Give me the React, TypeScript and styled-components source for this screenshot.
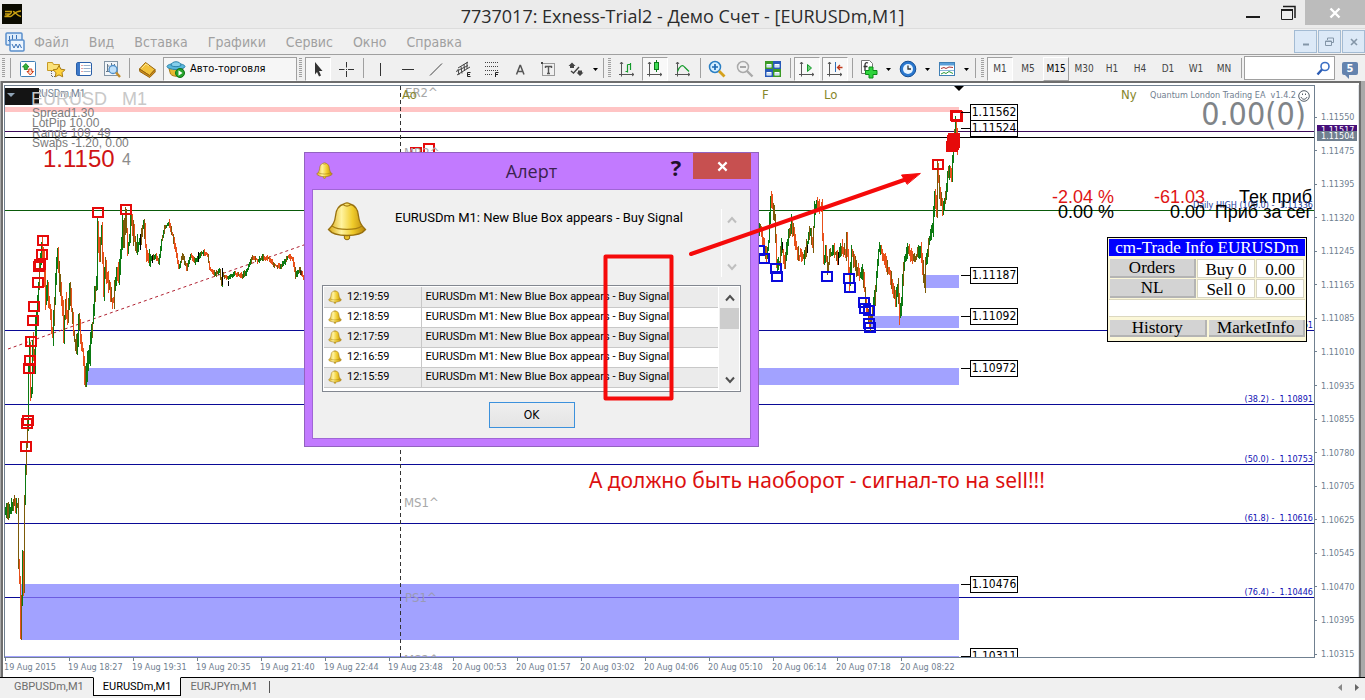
import React from "react";
import styled, { createGlobalStyle, css } from "styled-components";

const UI = `"DejaVu Sans Condensed", "DejaVu Sans", "Noto Sans", sans-serif`;
const NARROW = `Roboto, "Liberation Sans", sans-serif`;
const NOTE = `"Noto Sans", "Open Sans", sans-serif`;
const SEGOE = `"Open Sans", "Noto Sans", sans-serif`;
const ARIAL = `"Liberation Sans", Arial, sans-serif`;
const SERIF = `"Liberation Serif", "Times New Roman", serif`;

const GlobalStyle = createGlobalStyle`
  * { box-sizing: border-box; }
  body { margin: 0; background: #f0f0f0; font-family: ${UI}; font-size: 11px; overflow: hidden; }
  button, input { font: inherit; color: inherit; margin: 0; padding: 0; border: 0; background: none; border-radius: 0; }
  svg { display: block; flex: none; }
`;

const Page = styled.div`
  display: flex;
  flex-direction: column;
  min-height: 100vh;
  min-width: 0;
  background: #f0f0f0;
`;

/* ---------- window caption ---------- */

const TitleBar = styled.header`
  display: grid;
  grid-template-columns: 1fr auto 1fr;
  height: 28px;
  background: #ebebeb;
`;
const TitleIcon = styled.div`
  padding: 4px 2px;
`;
const Title = styled.h1`
  margin: 0;
  font: 400 18px/32px ${SEGOE};
  color: #2b2b2b;
  white-space: nowrap;
`;
const CaptionButtons = styled.div`
  display: flex;
  justify-content: flex-end;
`;
const CaptionButton = styled.button<{ $close?: boolean }>`
  display: flex;
  align-items: center;
  justify-content: center;
  width: ${(p) => (p.$close ? 60 : 35)}px;
  height: 25px;
  background: ${(p) => (p.$close ? "#bcbcbc" : "transparent")};
`;

/* ---------- menu ---------- */

const MenuBar = styled.nav`
  display: flex;
  align-items: center;
  height: 27px;
  padding-left: 5px;
  background: #f0f0f0;
  border-top: 1px solid #dcdcdc;
  border-bottom: 1px solid #a0a0a0;
`;
const MenuItems = styled.div`
  display: flex;
  gap: 20px;
  flex: 1;
  padding-left: 9px;
`;
const MenuItem = styled.button`
  font: 14px/16px ${UI};
  color: #a0a0a0;
`;
const ChildButton = styled.button`
  display: flex;
  align-items: center;
  justify-content: center;
  width: 23px;
  height: 23px;
  margin-left: 1px;
  background: #dce9f7;
  border: 1px solid #a3bbd3;
`;

/* ---------- toolbar ---------- */

const Toolbar = styled.div`
  display: flex;
  align-items: center;
  height: 26px;
  background: #f0f0f0;
  overflow: hidden;
`;
const Grip = styled.span`
  flex: none;
  width: 3px;
  height: 20px;
  margin: 0 2px;
  background: repeating-linear-gradient(#a0a0a0 0 1px, #f0f0f0 1px 2px);
`;
const Divider = styled.span<{ $wide?: boolean }>`
  flex: none;
  width: 1px;
  height: 20px;
  margin: 0 ${(p) => (p.$wide ? 3 : 2)}px 0 3px;
  background: #a0a0a0;
`;
const pressed = css`
  background: #f8f8f8;
  border-color: #a0a0a0 #fff #fff #a0a0a0;
`;
const ToolButton = styled.button<{ $on?: boolean; $raised?: boolean }>`
  display: flex;
  flex: none;
  align-items: center;
  justify-content: center;
  width: 26px;
  height: 24px;
  margin: 2px 1px 0;
  border: 1px solid transparent;
  font: 10px/12px ${UI};
  color: ${(p) => (p.$raised ? "#000" : "#444")};
  ${(p) => p.$on && pressed}
  ${(p) => p.$raised && css`border-color: #fff #a0a0a0 #a0a0a0 #fff;`}
`;
const CaretButton = styled.button<{ $narrow?: boolean }>`
  display: flex;
  flex: none;
  align-items: center;
  justify-content: center;
  width: ${(p) => (p.$narrow ? 10 : 11)}px;
  height: 24px;
  margin-top: 2px;
`;
const AutoTrade = styled.button`
  display: flex;
  flex: none;
  align-items: center;
  gap: 4px;
  width: 134px;
  height: 24px;
  margin: 2px 0 0 2px;
  padding-left: 2px;
  border: 1px solid #a0a0a0;
  border-bottom-color: #fff;
  background: #f6f6f6;
  font: 11px/14px ${UI};
  color: #000;
`;
const SearchBox = styled.label`
  display: flex;
  align-items: center;
  flex: 1;
  min-width: 60px;
  height: 24px;
  padding-right: 3px;
  background: #fff;
  border: 1px solid #a0a0a0;
`;
const SearchInput = styled.input`
  flex: 1;
  width: 20px;
  outline: none;
`;
const ChatButton = styled.button`
  display: flex;
  flex: none;
  align-items: center;
  justify-content: center;
  width: 30px;
  height: 24px;
`;
const ChatBubble = styled.span`
  position: relative;
  width: 16px;
  height: 13px;
  background: #6483ae;
  border-radius: 2px;
  color: #fff;
  font: bold 11px/13px ${UI};
  text-align: center;
  &::after {
    content: "";
    position: absolute;
    left: 3px;
    top: 13px;
    border: 2px solid transparent;
    border-top-color: #6483ae;
    border-right-color: #6483ae;
  }
`;

/* ---------- chart window ---------- */

const Workspace = styled.main`
  display: flex;
  flex: 1;
  min-height: 0;
  background: #a9a9a9;
`;
const ChartFrame = styled.section`
  flex: 1;
  min-width: 0;
  display: grid;
  grid-template-columns: minmax(0, 1fr) 44px;
  grid-template-rows: minmax(0, 1fr) 19px;
  margin: 0 4px 0 1px;
  padding: 2px 0 0 1px;
  background: #fff;
  border: solid #6e6e6e;
  border-width: 2px 2px 0 2px;
`;
const Plot = styled.div`
  position: relative;
  overflow: hidden;
  border: 1px solid #708090;
`;
const Series = styled.svg`
  position: absolute;
  inset: 0;
  width: 100%;
  height: 100%;
`;
const PriceAxis = styled.div`
  position: relative;
  grid-row: 1 / 3;
  grid-column: 2;
  display: flex;
  flex-direction: column;
  justify-content: space-between;
  padding: 26px 0 17px;
  border-right: 1px solid #dfe3e8;
`;
const AxisPrice = styled.span`
  display: flex;
  align-items: center;
  gap: 4px;
  font: 9px/12px ${UI};
  color: #708090;
  &::before {
    content: "";
    width: 2px;
    height: 1px;
    background: #708090;
  }
`;
const AxisBadge = styled.span<{ $top: number; $bg: string }>`
  position: absolute;
  top: ${(p) => p.$top}px;
  left: 2px;
  width: 40px;
  padding-left: 4px;
  background: ${(p) => p.$bg};
  color: #fff;
  font: 9px/10px ${UI};
`;
const TimeAxis = styled.div`
  display: flex;
  min-width: 0;
  overflow: hidden;
`;
const TimeLabel = styled.span`
  flex: none;
  width: 64px;
  height: 16px;
  background: linear-gradient(#708090, #708090) 1px 0 / 1px 3px no-repeat;
  font: 9px/18px ${UI};
  color: #708090;
  white-space: nowrap;
`;

const Note = styled.span<{
  $x?: number;
  $right?: number;
  $y: number;
  $size: number;
  $color: string;
  $font?: string;
}>`
  position: absolute;
  ${(p) => (p.$right !== undefined ? `right: ${p.$right}px;` : `left: ${p.$x}px;`)}
  top: ${(p) => p.$y}px;
  font: ${(p) => p.$size}px/16px ${(p) => p.$font || UI};
  color: ${(p) => p.$color};
  white-space: pre;
`;
const SymbolTab = styled.button`
  position: absolute;
  left: 0;
  top: 2px;
  display: flex;
  width: 34px;
  height: 17px;
  padding: 5px 0 0 2px;
  background: #141414;
`;
const PriceTag = styled.span<{ $y: number }>`
  position: absolute;
  left: 965px;
  top: ${(p) => p.$y}px;
  width: 48px;
  height: 17px;
  border: 1px solid #000;
  text-align: center;
  font: 12px/15px ${UI};
  color: #000;
  &::before {
    content: "";
    position: absolute;
    right: 100%;
    top: 7px;
    width: 10px;
    height: 1px;
    background: #000;
  }
`;
const Smiley = styled.span`
  position: absolute;
  right: 4px;
  top: 4px;
`;

/* ---------- trade info panel ---------- */

const TradePanel = styled.aside`
  position: absolute;
  right: 7px;
  top: 151px;
  display: flex;
  flex-direction: column;
  width: 200px;
  height: 105px;
  padding: 1px;
  background: #fbf7d8;
  border: 1px solid #000;
  font: 17px/17px ${SERIF};
  color: #000;
`;
const TradeTitle = styled.div`
  height: 17px;
  background: #0000ff;
  color: #fff;
  text-align: center;
  white-space: nowrap;
`;
const TradeGrid = styled.div`
  display: grid;
  grid-template-columns: 86px 58px 48px;
  gap: 1px;
  padding: 3px 0 1px 1px;
`;
const TradeColumn = styled.div`
  display: flex;
  flex-direction: column;
  gap: 1px;
`;
const TradeButton = styled.button`
  flex: 1;
  background: #d3d3d3;
  border: solid #b4b4b4;
  border-width: 0 2px 2px 0;
  text-align: center;
  line-height: 15px;
`;
const TradeCell = styled.span`
  height: 19px;
  background: #fff;
  border: 1px solid #d8d5c4;
  text-align: center;
  line-height: 19px;
`;
const TradeBlank = styled.div`
  height: 18px;
  background: #fff;
  border: solid #dcd8c0;
  border-width: 1px 0;
`;
const TradeFooter = styled.div`
  display: flex;
  gap: 2px;
  height: 23px;
  padding: 3px 0 3px 1px;
`;

/* ---------- alert dialog ---------- */

const Dialog = styled.section`
  position: absolute;
  left: 299px;
  top: 66px;
  display: flex;
  flex-direction: column;
  width: 455px;
  height: 295px;
  padding: 0 7px 8px;
  background: #c27aff;
  border: 1px solid #9263bf;
`;
const DialogHead = styled.div`
  display: grid;
  grid-template-columns: 84px 1fr 84px;
  height: 36px;
`;
const DialogIcon = styled.div`
  padding: 9px 0 0 4px;
`;
const DialogTitle = styled.h2`
  margin: 0;
  text-align: center;
  font: 400 18px/37px ${SEGOE};
  color: #3b2350;
`;
const DialogHeadButtons = styled.div`
  display: flex;
  justify-content: flex-end;
`;
const HelpButton = styled.button`
  width: 26px;
  height: 28px;
  padding-right: 8px;
  font: bold 22px/28px ${SEGOE};
  color: #1f1029;
`;
const DialogClose = styled.button`
  display: flex;
  align-items: center;
  justify-content: center;
  width: 58px;
  height: 26px;
  background: #c75050;
`;
const DialogBody = styled.div`
  flex: 1;
  display: flex;
  flex-direction: column;
  align-items: center;
  padding: 11px 9px 10px;
  background: #f0f0f0;
  border: 1px solid #a066d6;
`;
const MessageRow = styled.div`
  display: flex;
  align-self: stretch;
  height: 84px;
  padding-left: 5px;
`;
const Message = styled.p`
  flex: 1;
  margin: 0;
  padding: 8px 0 0 28px;
  font: 13px/18px ${NARROW};
  color: #000;
  white-space: nowrap;
`;
const ScrollTrack = styled.div<{ $muted?: boolean }>`
  display: flex;
  flex: none;
  flex-direction: column;
  width: 20px;
  height: ${(p) => (p.$muted ? "68px" : "auto")};
  margin-top: ${(p) => (p.$muted ? 8 : 0)}px;
  background: #f0f0f0;
  border-left: 1px solid ${(p) => (p.$muted ? "#fff" : "#f0f0f0")};
`;
const ScrollButton = styled.button`
  display: flex;
  align-items: center;
  justify-content: center;
  height: 21px;
`;
const ScrollSpace = styled.div`
  flex: 1;
`;
const ScrollThumb = styled.div`
  height: 21px;
  background: #cdcdcd;
`;
const AlertList = styled.div`
  display: flex;
  align-self: stretch;
  height: 107px;
  padding: 1px;
  background: #fff;
  border: 1px solid #828790;
`;
const AlertTable = styled.table`
  flex: 1;
  height: 100px;
  border-collapse: collapse;
  table-layout: fixed;
  margin-right: 1px;
  font: 11px/16px ${NARROW};
  color: #000;
  tr:nth-child(odd) { background: #ebebeb; }
  td { height: 20px; padding: 0 0 0 4px; border-bottom: 1px solid #c8c8c8; white-space: nowrap; }
  td:first-child { width: 97px; border-right: 1px solid #c8c8c8; }
`;
const TimeCell = styled.span`
  display: flex;
  align-items: center;
  gap: 5px;
`;
const OkButton = styled.button`
  width: 86px;
  height: 26px;
  margin-top: 10px;
  background: linear-gradient(#efefef, #e4e4e4);
  border: 1px solid #3c91dc;
  font: 12px/16px ${UI};
  color: #000;
`;
const Annotation = styled.p`
  position: absolute;
  left: 584px;
  top: 380px;
  margin: 0;
  font: 21px/28px ${NOTE};
  color: #dc1010;
  white-space: nowrap;
`;

/* ---------- chart tabs ---------- */

const TabBar = styled.footer`
  display: flex;
  align-items: flex-start;
  height: 23px;
  background: #f0f0f0;
  border-top: 1px solid #000;
  border-bottom: 2px solid #fff;
`;
const Tab = styled.button<{ $active?: boolean }>`
  height: ${(p) => (p.$active ? 19 : 18)}px;
  padding: 0 9px;
  font: 11px/16px ${NARROW};
  color: ${(p) => (p.$active ? "#000" : "#6d6d6d")};
  ${(p) =>
    p.$active &&
    css`
      margin-top: -1px;
      background: #fff;
      border: 1px solid #000;
      border-top-color: #fff;
    `}
`;
const Tabs = styled.div`
  display: flex;
  flex: 1;
  padding-left: 5px;
`;
const TabEnd = styled.span`
  width: 1px;
  height: 12px;
  margin: 3px 0 0 2px;
  background: #555;
`;
const TabArrow = styled.button`
  display: flex;
  align-items: center;
  justify-content: center;
  width: 17px;
  height: 18px;
`;

/* ---------- data ---------- */

/* [x, price level in window pixels] turning points of the one-minute series */
const LEFT: number[][] = [
  [5, 512], [8, 510], [9, 517], [11, 507], [14, 501], [16, 506], [18, 503], [19, 565], [20, 580], [21, 636], [22, 600],
  [23, 557], [24, 590], [25, 500], [26, 470], [27, 445], [28, 425], [29, 370], [30, 345], [31, 395], [32, 390], [33, 340],
  [35, 370], [36, 325], [38, 300], [40, 270], [42, 245], [44, 255], [46, 300], [48, 290], [50, 305], [52, 330], [53, 335],
  [55, 300], [57, 265], [58, 252], [60, 280], [63, 305], [64, 333], [66, 300], [68, 320], [70, 285], [72, 310], [75, 340],
  [77, 350], [79, 320], [83, 350], [85, 375], [86, 380], [88, 360], [90, 355], [92, 330], [94, 315], [95, 295], [97, 280],
  [98, 225], [100, 260], [102, 225], [104, 290], [106, 265], [108, 280], [112, 298], [114, 298], [117, 270], [119, 275],
  [121, 255], [123, 222], [124, 240], [126, 217], [128, 247], [130, 240], [131, 218], [134, 235], [137, 247], [140, 240],
  [142, 235], [144, 220], [146, 245], [149, 260], [153, 258], [156, 255], [159, 262], [162, 240], [165, 228], [169, 222],
  [173, 235], [177, 255], [179, 267], [183, 255], [187, 268], [191, 254], [195, 262], [199, 255], [204, 252], [208, 255],
  [210, 268], [215, 274], [220, 270], [222, 285], [223, 274], [228, 278], [235, 273], [242, 275], [246, 272], [248, 268],
  [253, 256], [258, 260], [263, 257], [270, 258], [274, 265], [280, 266], [285, 262], [288, 256], [293, 258], [296, 275],
  [300, 270], [304, 278],
];
const RIGHT: number[][] = [
  [758, 230], [761, 228], [764, 245], [767, 255], [769, 240], [771, 196], [773, 206], [775, 218], [777, 265], [780, 262],
  [782, 245], [785, 265], [788, 240], [792, 222], [795, 240], [799, 256], [804, 256], [807, 245], [811, 230], [813, 245],
  [815, 208], [817, 203], [820, 206], [822, 206], [824, 260], [826, 250], [828, 272], [830, 255], [834, 250], [838, 258],
  [842, 247], [846, 255], [847, 234], [850, 285], [852, 252], [855, 263], [860, 275], [863, 270], [866, 300], [870, 325],
  [873, 312], [876, 290], [879, 250], [881, 248], [885, 258], [889, 270], [893, 285], [896, 300], [898, 285], [900, 316],
  [902, 300], [904, 264], [908, 250], [912, 255], [916, 258], [921, 248], [925, 285], [926, 264], [930, 237], [933, 230],
  [935, 195], [937, 210], [938, 168], [940, 190], [943, 212], [945, 200], [948, 176], [950, 170], [952, 175], [954, 145],
  [956, 120], [958, 150],
];

type Trend = "up" | "down" | "mixed";
type Bar = { x: number; top: number; bottom: number; trend: Trend };

function toBars(points: number[][], seed: number): Bar[] {
  let state = seed;
  const random = () => {
    state = (state * 1103515245 + 12345) % 2147483648;
    return state / 2147483648;
  };
  const bars: Bar[] = [];
  for (let i = 1; i < points.length; i++) {
    const [x0, y0] = points[i - 1];
    const [x1, y1] = points[i];
    for (let x = x0; x < x1; x++) {
      const a = y0 + ((y1 - y0) * (x - x0)) / (x1 - x0);
      const b = y0 + ((y1 - y0) * (x + 1 - x0)) / (x1 - x0);
      const calm = x > 150 && x < 310 ? 3 : x > 30 && x < 150 ? 11 : 8;
      const top = Math.round(Math.min(a, b) - random() * calm);
      const bottom = Math.round(Math.max(a, b) + random() * calm) + 1;
      const trend: Trend = random() < 0.3 ? "mixed" : y1 < y0 ? "up" : "down";
      bars.push({ x, top, bottom, trend });
    }
  }
  return bars;
}
const BARS = [...toBars(LEFT, 7), ...toBars(RIGHT, 42)];
const barPath = (trend: Trend) =>
  BARS.filter((b) => b.trend === trend)
    .map((b) => `M${b.x + 0.5} ${b.top}V${b.bottom}`)
    .join("");
const DOJI = "M140.500 234v16M152.500 255v8M198.500 252v10M222.500 268v17M228.500 281v5M782.500 242v8M807.500 245v8M838.500 252v13M301 270v5";

const RED_MARKS: number[][] = [
  [43, 240], [42, 254], [40, 264], [39, 266], [38, 282], [34, 306], [33, 320], [31, 341], [30, 360], [29, 368],
  [28, 420], [27, 423], [26, 446], [98, 212], [126, 209], [416, 152], [429, 148], [938, 164], [956, 115], [957, 116],
  [954, 138], [953, 140], [954, 142], [953, 144], [952, 146],
];
const BLUE_MARKS: number[][] = [
  [759, 250], [764, 258], [776, 268], [777, 276], [827, 276], [849, 278], [850, 287], [864, 302], [865, 308], [869, 310],
  [869, 323], [870, 327],
];
const RULES: { y: number; color: string }[] = [
  { y: 131, color: "#3c0a5a" },
  { y: 137, color: "#000" },
  { y: 210, color: "#0a5a0a" },
  { y: 330, color: "#0a0a96" },
  { y: 404, color: "#0a0a96" },
  { y: 464, color: "#0a0a96" },
  { y: 523, color: "#0a0a96" },
  { y: 597, color: "#0a0a96" },
];
const BOXES = [
  { x: 86, y: 368, w: 873, h: 17 },
  { x: 21, y: 584, w: 938, h: 56 },
  { x: 925, y: 275, w: 34, h: 13 },
  { x: 870, y: 316, w: 89, h: 12 },
  { x: 5, y: 656, w: 954, h: 2 },
];
const AXIS = [
  "1.11550", "1.11475", "1.11395", "1.11320", "1.11245", "1.11165", "1.11085", "1.11010", "1.10935",
  "1.10855", "1.10780", "1.10705", "1.10625", "1.10545", "1.10470", "1.10395", "1.10315",
];
const TIMES = [
  "19 Aug 2015", "19 Aug 18:27", "19 Aug 19:31", "19 Aug 20:35", "19 Aug 21:40", "19 Aug 22:44", "19 Aug 23:48",
  "20 Aug 00:53", "20 Aug 01:57", "20 Aug 03:02", "20 Aug 04:06", "20 Aug 05:10", "20 Aug 06:14", "20 Aug 07:18",
  "20 Aug 08:22",
];
const TAGS: [string, number][] = [
  ["1.11562", 18], ["1.11524", 34], ["1.11187", 181], ["1.11092", 222], ["1.10972", 274], ["1.10476", 490], ["1.10311", 562],
];
const LEVELS: [string, number][] = [
  ["(23.6) -  1.11061", 231], ["(38.2) -  1.10891", 305], ["(50.0) -  1.10753", 365], ["(61.8) -  1.10616", 424],
  ["(76.4) -  1.10446", 498],
];
const ALERT_TIMES = ["12:19:59", "12:18:59", "12:17:59", "12:16:59", "12:15:59"];
const ALERT_TEXT = "EURUSDm M1: New Blue Box appears - Buy Signal";
const MENU = ["Файл", "Вид", "Вставка", "Графики", "Сервис", "Окно", "Справка"];
const FRAMES = ["M1", "M5", "M15", "M30", "H1", "H4", "D1", "W1", "MN"];

/* ---------- icons ---------- */

const Bell = ({ size }: { size: number }) => (
  <svg width={size} height={size} viewBox="0 0 40 40" aria-hidden="true">
    <defs>
      <linearGradient id="brass" x1="0" x2="1">
        <stop offset="0" stopColor="#d9a80f" />
        <stop offset=".35" stopColor="#fff3a0" />
        <stop offset=".65" stopColor="#f0cc2c" />
        <stop offset="1" stopColor="#b88408" />
      </linearGradient>
    </defs>
    <circle cx="20" cy="36" r="2.800" fill="#e8c02a" stroke="#8f6a10" />
    <path d="M17 3c1-1.600 5-1.600 6 0 6 1.500 8 6 8.500 12 .6 6 3 10 7 13.500-3 4-10 6-18.500 6s-15.500-2-18.500-6C5.500 25 8 21 8.500 15 9 9 11 4.500 17 3Z" fill="url(#brass)" stroke="#97700f" strokeWidth="1.300" />
    <path d="M5 25c6 4.500 24 4.500 30 0M16.500 4c2 1.200 5 1.200 7 0" fill="none" stroke="#a47c10" strokeWidth="1.300" />
  </svg>
);

const Cross = ({ color, size = 12 }: { color: string; size?: number }) => (
  <svg width={size} height={size} viewBox="0 0 12 12" aria-hidden="true">
    <path d="m1.500 1.500 9 9m0-9-9 9" stroke={color} strokeWidth="2.400" />
  </svg>
);

const Chevron = ({ down, color }: { down?: boolean; color: string }) => (
  <svg width="10" height="8" viewBox="0 0 10 8" aria-hidden="true">
    <path d={down ? "M1 1.500 5 6l4-4.500" : "M1 6.500 5 2l4 4.500"} fill="none" stroke={color} strokeWidth="2" />
  </svg>
);

const Caret = () => (
  <svg width="5" height="3" viewBox="0 0 5 3" aria-hidden="true">
    <path d="M0 0h5L2.500 3Z" fill="#000" />
  </svg>
);

const Glyph = ({ children }: { children: React.ReactNode }) => (
  <svg width="20" height="20" viewBox="0 0 20 20" fill="none" aria-hidden="true">
    {children}
  </svg>
);

const AXES = "M4.500 3v14.500M2 15.500h15M3 5l1.500-2L6 5M15 14l2 1.500-2 1.500";
const Axes = () => <path d={AXES} stroke="#555" />;

const ICONS: Record<string, React.ReactNode> = {
  market: (
    <Glyph>
      <rect x="2.500" y="2.500" width="15" height="15" rx="1" fill="#fff" stroke="#3f7fb5" />
      <path d="m4.500 8 3.300-3.500L11 8H9.300v2.500h-3V8Z" fill="#36b53a" stroke="#0b7a14" strokeWidth=".8" />
      <path d="m9 12.500 3.300 3.500 3.200-3.500h-1.700V10h-3v2.500Z" fill="#ffd9c8" stroke="#d03a12" strokeWidth="1" />
    </Glyph>
  ),
  favorites: (
    <Glyph>
      <path d="M1.500 3.500h5l1 2h6v6h-12Z" fill="#fbe27a" stroke="#c79a25" />
      <path d="M5.500 12v5.500H9" stroke="#666" strokeDasharray="1 1" />
      <path d="m13 6.500 1.900 3.700 4 .6-2.900 2.900.7 4.100-3.700-1.900-3.700 1.900.7-4.100-2.900-2.900 4-.6Z" fill="#ffd23c" stroke="#a97c12" />
    </Glyph>
  ),
  navigator: (
    <Glyph>
      <rect x="2.500" y="3.500" width="15" height="13" rx="1.500" fill="#fff" stroke="#2a5fa8" />
      <path d="M3 4h3v12H3Z" fill="#3c78c8" />
      <path d="M9.500 6.500h7M9.500 9.500h7M9.500 12.500h7" stroke="#9ab2cc" />
      <path d="M7.500 6.500h1M7.500 9.500h1M7.500 12.500h1" stroke="#c44" />
    </Glyph>
  ),
  tester: (
    <Glyph>
      <rect x="2.500" y="2.500" width="13" height="14" fill="#f3f6f9" stroke="#8495a5" />
      <path d="M5.500 5v8M5.500 7h2M9.500 4v6M12.500 5v5M7 12.500H4" stroke="#667a8c" />
      <circle cx="11" cy="10.500" r="4" fill="#bfe0fa" stroke="#4f8ec8" strokeWidth="1.300" />
      <path d="m14 13.500 4 4.500" stroke="#c08a2a" strokeWidth="2.400" />
    </Glyph>
  ),
  book: (
    <Glyph>
      <path d="m2.500 10 6-6.500 9.500 7-5.500 6Z" fill="#f2c23c" stroke="#96640c" />
      <path d="m2.500 10 .3 2.500 9.900 6 5.500-5.500-.2-2.500-5.500 6Z" fill="#d08f1e" stroke="#96640c" />
      <path d="m4.500 9.500 4.500-4.500 3 2" stroke="#ffe68c" />
    </Glyph>
  ),
  auto: (
    <Glyph>
      <path d="M3 9.500 4.500 15c3 3 8 3 11 0L17 9.500Z" fill="#e8b830" stroke="#a97c16" />
      <ellipse cx="10" cy="7.500" rx="9" ry="3" fill="#58b7dc" stroke="#2c83ab" />
      <path d="M5 6.500c0-5 10-5 10 0-2 1.600-8 1.600-10 0Z" fill="#86d0ec" stroke="#2c83ab" />
      <circle cx="14" cy="14" r="4.500" fill="#27a32c" stroke="#0e7414" />
      <path d="m12.500 11.300 4 2.700-4 2.700Z" fill="#fff" />
    </Glyph>
  ),
  cursor: (
    <Glyph>
      <path d="m7 3 7.500 9H11l2 4.500-2 1L9 13l-2 2.500Z" fill="#333" />
    </Glyph>
  ),
  crosshair: (
    <Glyph>
      <path d="M10.500 3v5.500M10.500 12v6M3 10.500h5.500M12 10.500h6M10 10.500h1" stroke="#333" />
    </Glyph>
  ),
  vline: <Glyph><path d="M10.500 4v13" stroke="#333" /></Glyph>,
  hline: <Glyph><path d="M4 10.500h12" stroke="#333" /></Glyph>,
  trend: <Glyph><path d="M4 16.500 16 4.500" stroke="#444" /></Glyph>,
  channel: (
    <Glyph>
      <path d="m2 12.500 12-6M3 16l13-8M4 10l1 6M7 7.500l1 7M10 5l.5 7M13 3v7M4 9l10-6" stroke="#444" />
      <path d="M16.500 13.500h-3v4h3M13.500 15.500h2.500" stroke="#222" />
    </Glyph>
  ),
  fibo: (
    <Glyph>
      <path d="M3 3.500h14M3 7.500h14M3 11.500h14M3 15.500h8" stroke="#444" strokeDasharray="1 1" />
      <path d="M13.500 18v-4.500h3M13.500 15.500h2.500" stroke="#222" />
    </Glyph>
  ),
  text: <Glyph><path d="m6.500 15.500 3.500-9h.5l3.500 9M7.500 12.500h5.500" stroke="#555" strokeWidth="1.500" /></Glyph>,
  label: (
    <Glyph>
      <path d="M4.500 4.500h12v12h-12Z" stroke="#444" strokeDasharray="1 1" />
      <path d="M7 7.500h7M10.500 7.500v7M7.500 7v2M13.500 7v2M9 14.500h3" stroke="#555" strokeWidth="1.400" />
      <path d="M3 3h2v2H3Z" fill="#444" />
    </Glyph>
  ),
  arrows: (
    <Glyph>
      <path d="M2.500 7 6 3.500 9.500 7H8v2H4V7ZM10.500 13.500 14 17l3.500-3.500H16v-2h-4v2Z" fill="#444" />
      <path d="m5 12 2.500 2L13 8" stroke="#444" strokeWidth="1.400" />
    </Glyph>
  ),
  bars: <Glyph><Axes /><path d="M10.500 5.500v8M8.500 12.500h2M10.500 5.500h3M13.500 4v7" stroke="#139a2a" strokeWidth="1.200" /></Glyph>,
  candles: (
    <Glyph>
      <Axes />
      <path d="M11.500 1v12" stroke="#0d7a1c" />
      <rect x="9.500" y="3.500" width="4" height="7" fill="#3fdc55" stroke="#0d7a1c" />
    </Glyph>
  ),
  line: <Glyph><Axes /><path d="M4.500 12.500c2.500-6 5-7 7-4.500l4.500 4.500" stroke="#139a2a" strokeWidth="1.200" /></Glyph>,
  zoomIn: (
    <Glyph>
      <circle cx="8" cy="8" r="5.500" fill="#d5efff" stroke="#2a7fc4" strokeWidth="1.500" />
      <path d="M8 5v6M5 8h6" stroke="#1d6ab4" strokeWidth="1.700" />
      <path d="m12 12 5.500 5.500" stroke="#d5a11c" strokeWidth="2.800" />
    </Glyph>
  ),
  zoomOut: (
    <Glyph>
      <circle cx="8" cy="8" r="5.500" fill="#f1f1f1" stroke="#aaa" strokeWidth="1.500" />
      <path d="M5 8h6" stroke="#999" strokeWidth="1.700" />
      <path d="m12 12 5.500 5.500" stroke="#aaa" strokeWidth="2.400" />
    </Glyph>
  ),
  tile: (
    <Glyph>
      <path d="M2 2h8v8H2ZM10 10h8v8h-8Z" fill="#3b9a26" />
      <path d="M10 2h8v8h-8ZM2 10h8v8H2Z" fill="#2759b8" />
      <path d="M3.500 5h5v3.500h-5ZM11.500 5h5v3.500h-5ZM3.500 13h5v3.500h-5ZM11.500 13h5v3.500h-5Z" fill="#fff" />
      <path d="M3.500 7h5M11.500 7h5M3.500 15h5M11.500 15h5" stroke="#9cc3e4" />
    </Glyph>
  ),
  scroll: <Glyph><Axes /><path d="m10.500 5.500 4 3.500-4 3.500Z" fill="#6ad277" stroke="#139a2a" /></Glyph>,
  shift: <Glyph><Axes /><path d="M10.500 3v10" stroke="#2f6db5" /><path d="M17.500 8.500h-5M15 6l-2.500 2.500L15 11" stroke="#c0391b" strokeWidth="1.300" /></Glyph>,
  indicator: (
    <Glyph>
      <path d="M2.500 1.500h8l3 3v10h-11Z" fill="#fff" stroke="#777" />
      <path d="M9 4c-2-.8-3 0-3 2v6M4.500 7.500h4" stroke="#333" strokeWidth="1.300" />
      <path d="M10 8h4v3.500h4v4h-4V19h-4v-3.500H6.500v-4H10Z" fill="#2fd43c" stroke="#0d8a18" />
    </Glyph>
  ),
  clock: (
    <Glyph>
      <circle cx="10" cy="10" r="7.800" fill="#2a78cf" stroke="#174f94" />
      <circle cx="10" cy="10" r="5" fill="#e9f5ff" />
      <path d="M10 6.500V10h3" stroke="#333" strokeWidth="1.300" />
    </Glyph>
  ),
  template: (
    <Glyph>
      <rect x="2.500" y="3.500" width="15" height="13" fill="#fff" stroke="#3f7fb5" />
      <path d="M3 4h14v2.500H3Z" fill="#5a9fd8" />
      <path d="M3 11.500h14" stroke="#8bb7dc" />
      <path d="m4 9.500 3-1 2 1 3-1.500 4 .5" stroke="#a83232" />
      <path d="m4 15 3-1.500 2 1 3-2 4 2" stroke="#2b9a3a" />
    </Glyph>
  ),
};

const Tool = ({ name, label, on }: { name: string; label: string; on?: boolean }) => (
  <ToolButton $on={on} aria-label={label}>
    {ICONS[name]}
  </ToolButton>
);

/* ---------- sections ---------- */

const Caption = () => (
  <TitleBar>
    <TitleIcon>
      <svg width="20" height="20" viewBox="0 0 20 20" aria-hidden="true">
        <path d="M0 0h20v20H0Z" fill="#0a0a00" />
        <path d="M3 7.500h6.500c0 2-3 4-7 5h6c3-1 4-5.500 10.500-5.500M3 10h5M11 7.500c2.500 0 4 5 8 5" fill="none" stroke="#c9a012" strokeWidth="1.400" />
      </svg>
    </TitleIcon>
    <Title>7737017: Exness-Trial2 - Демо Счет - [EURUSDm,M1]</Title>
    <CaptionButtons>
      <CaptionButton aria-label="Свернуть">
        <svg width="14" height="12" viewBox="0 0 14 12"><path d="M0 10h14" stroke="#1c1c1c" strokeWidth="2" /></svg>
      </CaptionButton>
      <CaptionButton aria-label="Развернуть">
        <svg width="16" height="16" viewBox="0 0 16 16" fill="none" stroke="#1c1c1c"><path d="M3 1.500h12V13" strokeWidth="1.500" /><path d="M1.500 4.500h11v10h-11Z" /><path d="M1 5h12" strokeWidth="2" /></svg>
      </CaptionButton>
      <CaptionButton $close aria-label="Закрыть"><Cross color="#fff" /></CaptionButton>
    </CaptionButtons>
  </TitleBar>
);

const Menu = () => (
  <MenuBar>
    <svg width="20" height="20" viewBox="0 0 20 20" fill="none" aria-hidden="true">
      <rect x="1" y="1" width="16" height="12" rx="1" fill="#dcebfa" stroke="#5a8fcc" strokeWidth="1.500" />
      <path d="M4.500 4v6M7.500 3v5M11.500 3v4M3 8.500h3" stroke="#3a72b8" />
      <rect x="5" y="8" width="14" height="11" rx="1" fill="#eef6ff" stroke="#5a8fcc" strokeWidth="1.500" />
      <path d="m7 12 2 4 2-4 2 4 1.500-4 2 4" stroke="#3a72b8" />
    </svg>
    <MenuItems>
      {MENU.map((m) => (
        <MenuItem key={m}>{m}</MenuItem>
      ))}
    </MenuItems>
    <ChildButton aria-label="Свернуть окно">
      <svg width="8" height="8" viewBox="0 0 8 8"><path d="M1 6.500h6" stroke="#8496a8" strokeWidth="2" /></svg>
    </ChildButton>
    <ChildButton aria-label="Восстановить окно">
      <svg width="9" height="9" viewBox="0 0 9 9" fill="none" stroke="#8496a8"><path d="M2.500 3V1h6v4.500h-2M.5 4h6v4.500h-6ZM.5 4.500h6" /></svg>
    </ChildButton>
    <ChildButton aria-label="Закрыть окно"><Cross color="#8496a8" size={8} /></ChildButton>
  </MenuBar>
);

const Tools = () => (
  <Toolbar>
    <Grip />
    <Divider $wide />
    <Tool name="market" label="Обзор рынка" />
    <Tool name="favorites" label="Навигатор" />
    <Tool name="navigator" label="Терминал" />
    <Tool name="tester" label="Тестер стратегий" />
    <Divider $wide />
    <Tool name="book" label="MetaEditor" />
    <AutoTrade>{ICONS.auto}Авто-торговля</AutoTrade>
    <Grip />
    <Tool name="cursor" label="Курсор" on />
    <Tool name="crosshair" label="Перекрестие" />
    <Divider />
    <Tool name="vline" label="Вертикальная линия" />
    <Tool name="hline" label="Горизонтальная линия" />
    <Tool name="trend" label="Трендовая линия" />
    <Tool name="channel" label="Канал" />
    <Tool name="fibo" label="Фибоначчи" />
    <Tool name="text" label="Текст" />
    <Tool name="label" label="Метка" />
    <Tool name="arrows" label="Стрелки" />
    <CaretButton $narrow aria-label="Другие стрелки"><Caret /></CaretButton>
    <Divider />
    <Grip />
    <Tool name="bars" label="Бары" />
    <Tool name="candles" label="Свечи" on />
    <Tool name="line" label="Линия" />
    <Divider />
    <Tool name="zoomIn" label="Увеличить" />
    <Tool name="zoomOut" label="Уменьшить" />
    <Tool name="tile" label="Окна мозаикой" />
    <Divider />
    <Tool name="scroll" label="Автопрокрутка" on />
    <Tool name="shift" label="Сдвиг графика" on />
    <Divider />
    <Tool name="indicator" label="Индикаторы" />
    <CaretButton aria-label="Список индикаторов"><Caret /></CaretButton>
    <Tool name="clock" label="Периоды" />
    <CaretButton aria-label="Список периодов"><Caret /></CaretButton>
    <Tool name="template" label="Шаблоны" />
    <CaretButton aria-label="Список шаблонов"><Caret /></CaretButton>
    <Divider $wide />
    <Grip />
    {FRAMES.map((f) => (
      <ToolButton key={f} $on={f === "M1"} $raised={f === "M15"}>
        {f}
      </ToolButton>
    ))}
    <Divider />
    <SearchBox>
      <SearchInput aria-label="Поиск" />
      <svg width="15" height="15" viewBox="0 0 15 15" fill="none" aria-hidden="true">
        <circle cx="9" cy="5.500" r="4" stroke="#3b6fc4" strokeWidth="1.600" />
        <path d="m6 8.500-4.500 5" stroke="#2c5cb4" strokeWidth="2.400" />
      </svg>
    </SearchBox>
    <ChatButton aria-label="Сообщения"><ChatBubble>5</ChatBubble></ChatButton>
  </Toolbar>
);

const PriceSeries = () => (
  <Series aria-hidden="true">
    <rect x="0" y="21" width="954" height="5" fill="#ffc4c4" />
    {RULES.map((r) => (
      <line key={r.y} x1="0" x2="100%" y1={r.y - 85.5} y2={r.y - 85.5} stroke={r.color} />
    ))}
    <g transform="translate(-5 -86)">
      {BOXES.map((b) => (
        <rect key={b.y} x={b.x} y={b.y} width={b.w} height={b.h} fill="#a2a2ff" />
      ))}
      <path d="M21 597.500h938" stroke="#6c5ce0" />
      <path d="M400.500 86v572" stroke="#333" strokeDasharray="4 3" />
      <path d="M8 349 500 176" stroke="#b02030" strokeDasharray="3 3" />
      <path d={barPath("down")} stroke="#e8501a" />
      <path d={barPath("up")} stroke="#0b7a12" />
      <path d={barPath("mixed")} stroke="#7c5a08" />
      <path d={DOJI} stroke="#000" />
      <path d="M954 86h10l-5 5Z" fill="#000" />
      {RED_MARKS.map(([x, y]) => (
        <rect key={`${x}-${y}`} x={x - 5} y={y - 4} width="10" height="9" fill="none" stroke="#e60a0a" strokeWidth="2" />
      ))}
      {BLUE_MARKS.map(([x, y]) => (
        <rect key={`${x}-${y}`} x={x - 5} y={y - 4} width="10" height="9" fill="none" stroke="#0a0adc" strokeWidth="2" />
      ))}
    </g>
  </Series>
);

const Notes = () => (
  <>
    <Note $x={18} $y={0} $size={10} $color="#708090" $font={NARROW}>EURUSDm,M1</Note>
    <SymbolTab aria-label="Торговля одним кликом">
      <svg width="8" height="5" viewBox="0 0 8 5"><path d="M0 0h8L4 4Z" fill="#8fa3b5" /></svg>
    </SymbolTab>
    <Note $x={26} $y={5} $size={18} $color="#c8c8c8" $font={ARIAL}>EURUSD   M1</Note>
    <Note $x={27} $y={19} $size={12} $color="#7c7c7c" $font={ARIAL}>Spread1.30</Note>
    <Note $x={27} $y={29} $size={12} $color="#7c7c7c" $font={ARIAL}>LotPip 10.00</Note>
    <Note $x={27} $y={39} $size={12} $color="#7c7c7c" $font={ARIAL}>Range 109, 49</Note>
    <Note $x={27} $y={49} $size={12} $color="#7c7c7c" $font={ARIAL}>Swaps -1.20, 0.00</Note>
    <Note $x={38} $y={65} $size={24} $color="#d01414" $font={ARIAL}>1.1150</Note>
    <Note $x={117} $y={66} $size={16} $color="#8c8c8c" $font={ARIAL}>4</Note>
    <Note $x={400} $y={-1} $size={13} $color="#a8a8a8">ER2^</Note>
    <Note $x={397} $y={1} $size={13} $color="#86862a">Ao</Note>
    <Note $x={399} $y={59} $size={13} $color="#a8a8a8">MR2^</Note>
    <Note $x={757} $y={1} $size={13} $color="#86862a">F</Note>
    <Note $x={819} $y={1} $size={13} $color="#86862a">Lo</Note>
    <Note $x={1116} $y={1} $size={13} $color="#86862a">Ny</Note>
    <Note $x={399} $y={409} $size={13} $color="#a8a8a8">MS1^</Note>
    <Note $x={400} $y={504} $size={13} $color="#9a9ab4">PS1^</Note>
    <Note $x={399} $y={566} $size={13} $color="#a8a8a8">MS2^</Note>
    <Note $right={18} $y={1} $size={9} $color="#708090">Quantum London Trading EA  v1.4.2</Note>
    <Smiley>
      <svg width="12" height="12" viewBox="0 0 12 12" fill="none" stroke="#555e68" aria-hidden="true">
        <circle cx="6" cy="6" r="5.300" />
        <path d="M3 7c1 3 5 3 6 0M4.500 3.500v1.500M7.500 3.500v1.500" />
      </svg>
    </Smiley>
    <Note $right={8} $y={20} $size={32} $color="#808488">0.00(0)</Note>
    <Note $right={200} $y={103} $size={18} $color="#e01414" $font={ARIAL}>-2.04 %</Note>
    <Note $right={109} $y={103} $size={18} $color="#e01414" $font={ARIAL}>-61.03</Note>
    <Note $right={2} $y={103} $size={18} $color="#000" $font={ARIAL}>Тек приб</Note>
    <Note $right={1} $y={111} $size={9} $color="#1c3c9a">Daily HIGH (100.0) -  1.11336</Note>
    <Note $right={200} $y={118} $size={18} $color="#000" $font={ARIAL}>0.00 %</Note>
    <Note $right={109} $y={118} $size={18} $color="#000" $font={ARIAL}>0.00</Note>
    <Note $right={2} $y={118} $size={18} $color="#000" $font={ARIAL}>Приб за сег</Note>
    {LEVELS.map(([text, y]) => (
      <Note key={text} $right={1} $y={y} $size={9} $color="#1010b4">{text}</Note>
    ))}
    {TAGS.map(([text, y]) => (
      <PriceTag key={text} $y={y}>{text}</PriceTag>
    ))}
  </>
);

const TradeInfo = () => (
  <TradePanel>
    <TradeTitle>cm-Trade Info EURUSDm</TradeTitle>
    <TradeGrid>
      <TradeColumn>
        <TradeButton>Orders</TradeButton>
        <TradeButton>NL</TradeButton>
      </TradeColumn>
      <TradeColumn>
        <TradeCell>Buy 0</TradeCell>
        <TradeCell>Sell 0</TradeCell>
      </TradeColumn>
      <TradeColumn>
        <TradeCell>0.00</TradeCell>
        <TradeCell>0.00</TradeCell>
      </TradeColumn>
    </TradeGrid>
    <TradeBlank />
    <TradeFooter>
      <TradeButton>History</TradeButton>
      <TradeButton>MarketInfo</TradeButton>
    </TradeFooter>
  </TradePanel>
);

const Alert = () => (
  <Dialog role="dialog" aria-label="Алерт">
    <DialogHead>
      <DialogIcon><Bell size={17} /></DialogIcon>
      <DialogTitle>Алерт</DialogTitle>
      <DialogHeadButtons>
        <HelpButton>?</HelpButton>
        <DialogClose aria-label="Закрыть"><Cross color="#fff" size={11} /></DialogClose>
      </DialogHeadButtons>
    </DialogHead>
    <DialogBody>
      <MessageRow>
        <Bell size={40} />
        <Message>{ALERT_TEXT}</Message>
        <ScrollTrack $muted>
          <ScrollButton aria-label="Вверх"><Chevron color="#bfbfbf" /></ScrollButton>
          <ScrollSpace />
          <ScrollButton aria-label="Вниз"><Chevron down color="#bfbfbf" /></ScrollButton>
        </ScrollTrack>
      </MessageRow>
      <AlertList>
        <AlertTable>
          <tbody>
            {ALERT_TIMES.map((t) => (
              <tr key={t}>
                <td><TimeCell><Bell size={14} />{t}</TimeCell></td>
                <td>{ALERT_TEXT}</td>
              </tr>
            ))}
          </tbody>
        </AlertTable>
        <ScrollTrack>
          <ScrollButton aria-label="Вверх"><Chevron color="#505050" /></ScrollButton>
          <ScrollThumb />
          <ScrollSpace />
          <ScrollButton aria-label="Вниз"><Chevron down color="#505050" /></ScrollButton>
        </ScrollTrack>
      </AlertList>
      <OkButton>OK</OkButton>
    </DialogBody>
  </Dialog>
);

const Markup = () => (
  <Series aria-hidden="true" pointerEvents="none">
    <g transform="translate(-5 -86)" fill="none" stroke="#f50a0a" strokeLinejoin="round" strokeLinecap="round">
      <rect x="605.500" y="256.500" width="66" height="142" strokeWidth="4" />
      <path d="m691 254 213-74" strokeWidth="4" />
      <path d="m920 173.500-18.500 1.500 2.500 4 3 5Z" fill="#f50a0a" />
    </g>
  </Series>
);

export default function App() {
  return (
    <Page>
      <GlobalStyle />
      <Caption />
      <Menu />
      <Tools />
      <Workspace>
        <ChartFrame>
          <Plot>
            <PriceSeries />
            <Notes />
            <TradeInfo />
            <Alert />
            <Markup />
            <Annotation>А должно быть наоборот - сигнал-то на sell!!!</Annotation>
          </Plot>
          <PriceAxis>
            {AXIS.map((a) => (
              <AxisPrice key={a}>{a}</AxisPrice>
            ))}
            <AxisBadge $top={40} $bg="#46107a">1.11517</AxisBadge>
            <AxisBadge $top={46} $bg="#708090">1.11504</AxisBadge>
          </PriceAxis>
          <TimeAxis>
            {TIMES.map((t) => (
              <TimeLabel key={t}>{t}</TimeLabel>
            ))}
          </TimeAxis>
        </ChartFrame>
      </Workspace>
      <TabBar>
        <Tabs>
          <Tab>GBPUSDm,M1</Tab>
          <Tab $active>EURUSDm,M1</Tab>
          <Tab>EURJPYm,M1</Tab>
          <TabEnd />
        </Tabs>
        <TabArrow aria-label="Влево">
          <svg width="4" height="7" viewBox="0 0 4 7"><path d="M4 0v7L0 3.500Z" fill="#888" /></svg>
        </TabArrow>
        <TabArrow aria-label="Вправо">
          <svg width="4" height="7" viewBox="0 0 4 7"><path d="M0 0v7l4-3.500Z" fill="#666" /></svg>
        </TabArrow>
      </TabBar>
    </Page>
  );
}
